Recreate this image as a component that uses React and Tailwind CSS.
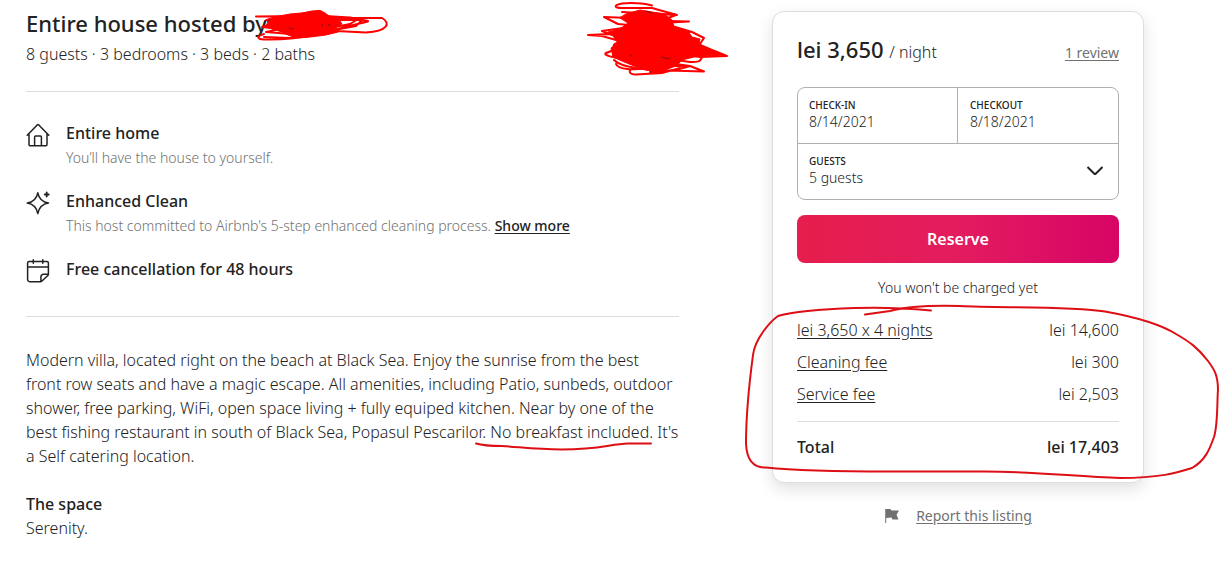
import React from "react";

const iconProps = {
  viewBox: "0 0 24 24",
  className: "size-6 shrink-0",
  fill: "none",
  stroke: "currentColor",
  strokeWidth: 1.5,
  strokeLinecap: "round",
  strokeLinejoin: "round",
  "aria-hidden": true,
};

function HomeIcon() {
  return (
    <svg {...iconProps}>
      <path d="M1.2 12.2 11.2 1.9q.8-.7 1.6 0L22.8 12.2M3 10.6v11a1.1 1.1 0 0 0 1.1 1.1h15.8a1.1 1.1 0 0 0 1.1-1.1v-11M8.6 22.5V14a1 1 0 0 1 1-1h4.8a1 1 0 0 1 1 1v8.5" />
    </svg>
  );
}

function SparkleIcon() {
  return (
    <svg {...iconProps}>
      <path d="M11.8 1.8C13 8 15.800 11 22.500 12 15.800 13 13 16.500 11.800 22.600 10.600 16.500 7.800 13 1.200 12 7.800 11 10.600 8 11.800 1.800Z" />
      <path strokeWidth="1.8" d="M20.700 1.500v4M18.700 3.500h4" />
    </svg>
  );
}

function CalendarIcon() {
  return (
    <svg {...iconProps}>
      <path d="M22.400 15.500V4a1.600 1.600 0 0 0-1.600-1.600H3.200A1.600 1.600 0 0 0 1.600 4v16.200a2.500 2.500 0 0 0 2.500 2.500h10.600a1.500 1.500 0 0 0 1-.4l6.200-5.800a1.500 1.500 0 0 0 .5-1ZM1.600 8h20.800M7.300.8v3.400M16.800.8v3.400M22.200 15.300h-4.700a2.600 2.600 0 0 0-2.600 2.600v4.700" />
    </svg>
  );
}

function Feature({ icon, title, children }) {
  return (
    <li className="flex gap-4">
      {icon}
      <div>
        <h3 className="text-base leading-5 font-medium">{title}</h3>
        {children && (
          <p className="mt-[5px] text-sm leading-5 font-light text-[#717171]">{children}</p>
        )}
      </div>
    </li>
  );
}

function FeeRow({ label, amount }) {
  return (
    <div className="flex justify-between">
      <dt>
        <button type="button" className="block cursor-pointer leading-5 underline underline-offset-2">
          {label}
        </button>
      </dt>
      <dd>{amount}</dd>
    </div>
  );
}

const labelClass = "block text-[10px] leading-3 font-medium uppercase";
const fieldClass = "block w-full appearance-none bg-transparent text-sm leading-[22px] font-light outline-none";

export default function App() {
  return (
    <div className="overflow-x-hidden bg-white font-['Noto_Sans','Liberation_Sans',sans-serif] text-[#222222]">
      <main className="grid grid-cols-[minmax(0,1fr)_372px] items-start gap-x-[93px] pt-[11px] pr-[75px] pb-10 pl-[26px]">
        <div className="relative">
          <header className="border-b border-[#dddddd] pb-[27px]">
            <h1 className="text-[22px] leading-6 font-medium">Entire house hosted by</h1>
            <p className="mt-[9px] text-base leading-5 font-light">
              8 guests · 3 bedrooms · 3 beds · 2 baths
            </p>
          </header>

          <ul className="flex flex-col gap-[23px] border-b border-[#dddddd] pt-[31px] pb-[33px]">
            <Feature icon={<HomeIcon />} title="Entire home">
              You’ll have the house to yourself.
            </Feature>
            <Feature icon={<SparkleIcon />} title="Enhanced Clean">
              This host committed to Airbnb's 5-step enhanced cleaning process.{" "}
              <a href="#clean" className="font-medium text-[#222222] underline underline-offset-2">
                Show more
              </a>
            </Feature>
            <Feature icon={<CalendarIcon />} title="Free cancellation for 48 hours" />
          </ul>

          <section className="pt-[31px] text-base leading-6 font-light">
            <p>
              Modern villa, located right on the beach at Black Sea. Enjoy the sunrise from the best
              <br />
              front row seats and have a magic escape. All amenities, including Patio, sunbeds, outdoor
              <br />
              shower, free parking, WiFi, open space living + fully equiped kitchen. Near by one of the
              <br />
              best fishing restaurant in south of Black Sea, Popasul Pescarilor. No breakfast included. It's
              <br />a Self catering location.
            </p>
            <h2 className="mt-6 font-medium">The space</h2>
            <p>Serenity.</p>
          </section>

          {/* Red pen marks over the host name, the avatar and the breakfast note */}
          <svg
            className="pointer-events-none absolute top-[-11px] left-[-26px] h-[460px] w-[740px]"
            viewBox="0 0 740 460"
            fill="none"
            stroke="#ff0000"
            strokeWidth="2"
            strokeLinecap="round"
            strokeLinejoin="round"
            aria-hidden="true"
          >
            <path
              fill="#ff0000"
              strokeWidth="1"
              d="M274 17 290 14 302 13 312 11 320 10.500 325 13 329 16 338 18 342 24 336 27 338 32 326 35 310 37 298 38 288 35 282 32 272 29 266 26 268 22 266 20Z"
            />
            <path d="M256 16.500 300 16 325 16 350 17.500 368 21 350 26 330 31M325 18 382 18C391 23 388 31 366 32.500L336 31 300 33M268 20 300 14 320 11 330 20 360 18 350 24 325 29M272 24 262 27 280 29 266 32 290 34M264 34C257 36 256 39 264 39.500 280 40 300 38 320 34L345 27 368 21.500M264 37 290 38 300 34M336 20 362 20 356 26 334 30" />
            <path stroke="#7a1010" strokeWidth="1" d="M268 21l2-1M290 28l3 1M322 24v2M328 25h2" />
            <path
              fill="#ff0000"
              strokeWidth="1"
              d="M626 14 640 10 652 12 664 14 672 20 674 27 688 31 692 37 700 39 699 44 712 50 724 55 704 56 694 57 682 60 676 66 662 71 646 70 634 66 622 61 613 57 611 48 618 43 613 36 608 32 620 29 628 23 620 18Z"
            />
            <path d="M652 5.500C644 3 630 2.500 622 3.500 614 5 613 8 622 8L652 8 677 15 650 13 630 18 604 17 618 24 640 26M622 12 676 15 668 18 640 19M670 21 689 21.500 660 23M630 27 602 31 612 35 640 32M588 35 602 36 616 40 632 42M588 35 610 34 640 30 672 26 692 32 704 38 700 44 680 41M690 32 672 30M620 42C606 45 622 49 606 53 602 55 616 59 634 60M606 53 624 46 640 50M727 56 712 50 700 45 680 44M727 56 700 57 678 53M614 60C620 66 634 68 650 70L704 71.500 690 66 676 64M616 64C618 70 634 70 648 68M634 68C628 70 628 74 636 74.500L662 73 680 68M704 56C698 60 704 62 690 62L662 58M660 66 690 66 676 70 650 72" />
            <path stroke="#7a1010" strokeWidth="1" d="M646 11l6 2M662 57l6 2 2-1M630 55l2 1" />
            <path
              stroke="#dd0f14"
              d="M476 443.500C484 446 494 446 502 446 520 447 534 449.500 562 449.500 600 449.500 610 444 628 443.500L651 443.500"
            />
          </svg>
        </div>

        <aside>
          <div className="relative rounded-xl border border-[#dddddd] bg-white p-6 shadow-[0_6px_16px_rgba(0,0,0,0.12)]">
            <div className="flex h-7 items-baseline justify-between">
              <p className="text-[22px] leading-[26px] font-medium">
                lei 3,650 <span className="text-base leading-none font-light">/ night</span>
              </p>
              <a href="#reviews" className="text-sm leading-none text-[#717171] underline underline-offset-2">
                1 review
              </a>
            </div>

            <form onSubmit={(e) => e.preventDefault()}>
              <div className="mt-[23px] grid grid-cols-2 rounded-lg border border-[#b0b0b0]">
                <div className="h-[55px] border-r border-[#b0b0b0] px-[11px] pt-[11px]">
                  <label htmlFor="checkin" className={labelClass}>Check-in</label>
                  <input id="checkin" type="text" defaultValue="8/14/2021" className={fieldClass} />
                </div>
                <div className="h-[55px] px-3 pt-[11px]">
                  <label htmlFor="checkout" className={labelClass}>Checkout</label>
                  <input id="checkout" type="text" defaultValue="8/18/2021" className={fieldClass} />
                </div>
                <div className="relative col-span-2 h-14 border-t border-[#b0b0b0] px-[11px] pt-[11px]">
                  <label htmlFor="guests" className={labelClass}>Guests</label>
                  <select id="guests" defaultValue="5" className={fieldClass}>
                    <option value="4">4 guests</option>
                    <option value="5">5 guests</option>
                    <option value="6">6 guests</option>
                  </select>
                  <svg
                    className="pointer-events-none absolute top-[18px] right-[14px] size-[18px]"
                    viewBox="0 0 18 18"
                    fill="none"
                    stroke="currentColor"
                    strokeWidth="2"
                    aria-hidden="true"
                  >
                    <path d="m1.500 5 6.800 6.700q.7.600 1.400 0L16.500 5" />
                  </svg>
                </div>
              </div>
              <button
                type="submit"
                className="mt-[15px] h-12 w-full cursor-pointer rounded-lg bg-[linear-gradient(to_right,#e61e4d_0%,#e31c5f_50%,#d70466_100%)] text-base font-semibold text-white"
              >
                Reserve
              </button>
            </form>

            <p className="mt-[15px] text-center text-sm leading-5 font-light">You won't be charged yet</p>

            <dl className="mt-[22px] flex flex-col gap-3 text-base leading-5 font-light">
              <FeeRow label="lei 3,650 x 4 nights" amount="lei 14,600" />
              <FeeRow label="Cleaning fee" amount="lei 300" />
              <FeeRow label="Service fee" amount="lei 2,503" />
              <div className="mt-[5px] flex justify-between border-t border-[#dddddd] pt-[15px] pb-px font-medium">
                <dt>Total</dt>
                <dd>lei 17,403</dd>
              </div>
            </dl>

            {/* Red pen loop round the price breakdown */}
            <svg
              className="pointer-events-none absolute top-[288px] left-[-33px] h-[180px] w-[480px]"
              viewBox="740 300 480 180"
              fill="none"
              stroke="#dd0f14"
              strokeWidth="2"
              strokeLinecap="round"
              strokeLinejoin="round"
              aria-hidden="true"
            >
              <path d="M931 310.500C905 308 880 307 855 308 825 309 795 311 778 316 771 321 755 338 753 355 749 385 746 410 746 444 747 462 755 468 766 467.500 800 471 850 471.500 890 471.500L980 471.500C1030 471 1070 476 1120 478 1160 478 1176 473 1192 468 1206 460 1210 448 1214 437 1218 425 1217 400 1218 390 1218 375 1214 369 1208 361 1198 348 1190 342 1176 334 1160 324 1130 316 1105 311.500 1070 306 1000 308 960 306 925 305 905 307 890 311L865 314.500" />
            </svg>
          </div>

          <div className="mt-[23px] flex items-center justify-center gap-4">
            <svg className="size-4 text-[#717171]" viewBox="0 0 16 16" fill="currentColor" aria-hidden="true">
              <path d="M1.200 1H6.500L7.500 2.500H15L12.500 6.800 14.500 11.500H8.500L7.500 9.500 2.200 10V15H1.200Z" />
            </svg>
            <a href="#report" className="text-sm leading-5 text-[#717171] underline underline-offset-2">
              Report this listing
            </a>
          </div>
        </aside>
      </main>
    </div>
  );
}
